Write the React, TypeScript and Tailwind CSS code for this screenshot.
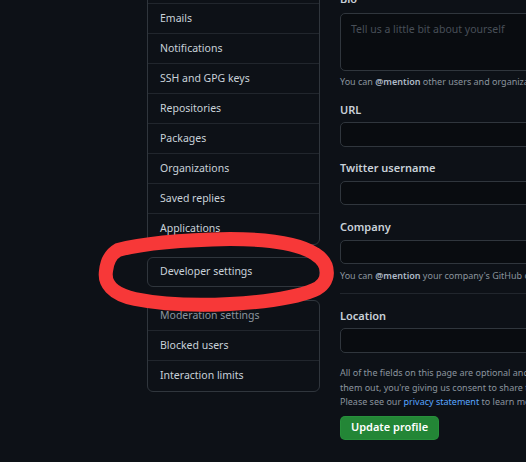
const topNav = [
  'Security & analysis',
  'Emails',
  'Notifications',
  'SSH and GPG keys',
  'Repositories',
  'Packages',
  'Organizations',
  'Saved replies',
  'Applications',
];

const moderation = ['Moderation settings', 'Blocked users', 'Interaction limits'];

const field = 'h-[24px] w-full rounded-[5px] border border-[#30363d] bg-[#090c10]';
const label = 'h-[16px] text-[11px] font-semibold leading-[16px] text-[#c9d1d9]';

function NavRow({ text, last, dim }: { text: string; last?: boolean; dim?: boolean }) {
  return (
    <div
      className={`flex h-[30px] items-center px-[12px] text-[10.5px] ${
        last ? '' : 'border-b border-[#21262d]'
      } ${dim ? 'text-[#8b949e]' : 'text-[#c9d1d9]'}`}
    >
      <span className="whitespace-nowrap">{text}</span>
    </div>
  );
}

export default function App() {
  return (
    <div
      className="relative h-[462px] w-[526px] overflow-hidden bg-[#0d1117]"
      style={{ fontFamily: '"Noto Sans", "Liberation Sans", sans-serif' }}
    >
      <div className="flex gap-[20px] pl-[147px]">
        {/* sidebar */}
        <div className="w-[173px] shrink-0">
          <div className="-mt-[27px] rounded-b-[6px] border border-[#30363d]">
            {topNav.map((t, i) => (
              <NavRow key={t} text={t} last={i === topNav.length - 1} />
            ))}
          </div>
          <div className="mt-[12px] rounded-[6px] border border-[#30363d]">
            <div className="flex h-[28px] items-center px-[12px] text-[10.5px] text-[#c9d1d9]">
              Developer settings
            </div>
          </div>
          <div className="mt-[13px] rounded-[6px] border border-[#30363d]">
            {moderation.map((t, i) => (
              <NavRow key={t} text={t} dim={i === 0} last={i === moderation.length - 1} />
            ))}
          </div>
        </div>

        {/* profile form */}
        <div className="w-[420px] shrink-0">
          <div className={`-mt-[9px] ${label}`}>Bio</div>
          <div className="mt-[6px] h-[58px] rounded-[5px] border border-[#30363d] bg-[#090c10] px-[10px] pt-[8px] text-[10.5px] text-[#484f58]">
            Tell us a little bit about yourself
          </div>
          <p className="mt-[5px] h-[12px] whitespace-nowrap text-[9px] leading-[12px] text-[#8b949e]">
            You can <span className="font-semibold text-[#adbac7]">@mention</span> other users and organizations to link to them.
          </p>

          <div className={`mt-[14px] ${label}`}>URL</div>
          <div className={`mt-[4px] ${field} h-[25px]`} />

          <div className={`mt-[13px] ${label}`}>Twitter username</div>
          <div className={`mt-[5px] ${field}`} />

          <div className={`mt-[14px] ${label}`}>Company</div>
          <div className={`mt-[5px] ${field}`} />
          <p className="mt-[6px] h-[12px] whitespace-nowrap text-[9px] leading-[12px] text-[#8b949e]">
            You can <span className="font-semibold text-[#adbac7]">@mention</span> your company's GitHub organization to link it.
          </p>

          <div className="mt-[11px] h-px bg-[#21262d]" />

          <div className={`mt-[14px] ${label}`}>Location</div>
          <div className={`mt-[4px] ${field} h-[25px]`} />

          <p className="mt-[13px] whitespace-nowrap text-[9px] leading-[14.5px] text-[#8b949e]">
            All of the fields on this page are optional and can be deleted at any time, and by filling
            <br />
            them out, you're giving us consent to share this data wherever your user profile appears.
            <br />
            Please see our <span className="text-[#58a6ff]">privacy statement</span> to learn more about how we use this information.
          </p>

          <button className="mt-[6px] flex h-[24px] w-[99px] items-center justify-center rounded-[5px] border border-[#2ea043]/40 bg-[#238636] text-[11px] font-semibold text-white">
            Update profile
          </button>
        </div>
      </div>

      {/* hand-drawn red circle */}
      <svg className="pointer-events-none absolute inset-0" width="526" height="462" viewBox="0 0 526 462">
        <path
          d="M118 250 C140 244 180 240 230 239 C270 239 300 244 315 254 C331 264 331 283 314 290 C295 298 265 302 230 304 C195 306 160 304 135 299 C112 294 104 283 106 271 C107 261 111 254 118 250 Z"
          fill="none"
          stroke="#f73838"
          strokeWidth="14"
          strokeLinejoin="round"
        />
      </svg>
    </div>
  );
}
